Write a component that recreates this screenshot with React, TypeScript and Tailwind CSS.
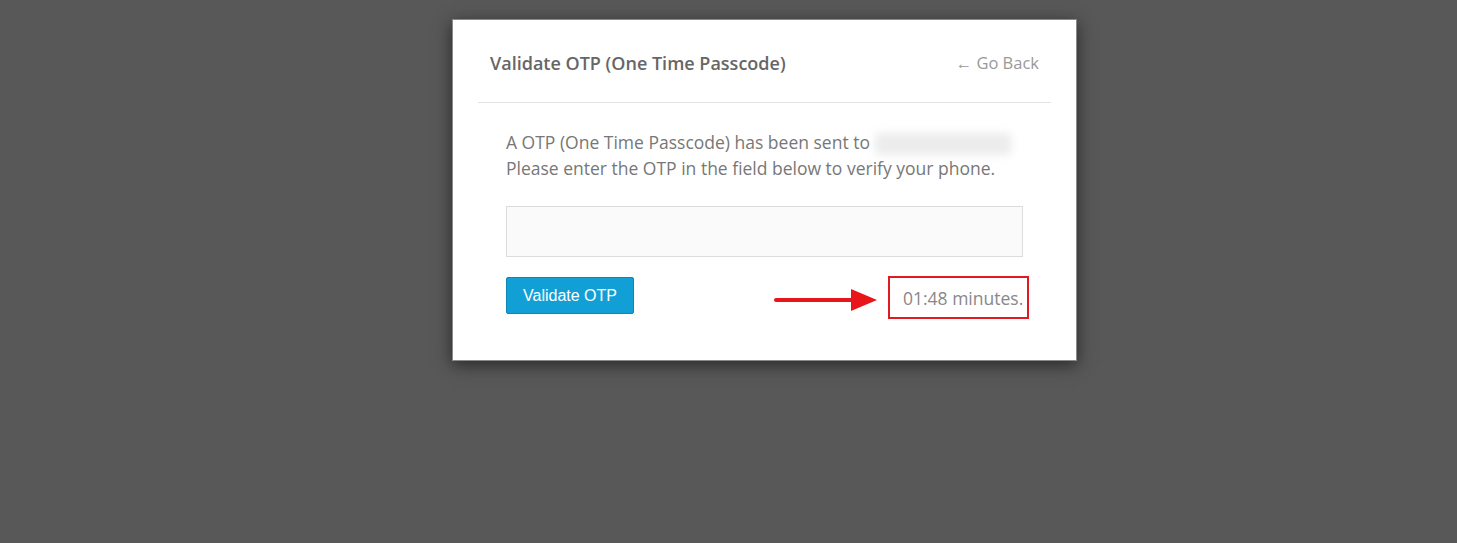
export default function App() {
  return (
    <div className="h-[543px] w-full bg-[#585858] pt-[19px] font-['Open_Sans',sans-serif]">
      <div className="ml-[452px] w-[625px] h-[342px] bg-white border border-[#8a8a8a] shadow-[0_4px_16px_rgba(0,0,0,0.55)] px-[25px]">
        {/* Header */}
        <div className="flex items-center justify-between px-3 pt-[31px] pb-[27px] border-b border-[#e3e3e3]">
          <h2 className="text-[18px] leading-[24px] font-semibold text-[#666]">
            Validate OTP (One Time Passcode)
          </h2>
          <a className="text-[16.5px] leading-[24px] text-[#999] cursor-pointer">
            ← Go Back
          </a>
        </div>

        {/* Body */}
        <div className="px-[28px] pt-[26px]">
          <p className="text-[17.5px] leading-[26px] text-[#777]">
            A OTP (One Time Passcode) has been sent to{" "}
            <span className="inline-block align-middle w-[136px] h-[22px] bg-[#ececec] blur-[4px] rounded" />
            <br />
            Please enter the OTP in the field below to verify your phone.
          </p>

          <input
            type="text"
            className="mt-[25px] block w-full h-[51px] bg-[#fafafa] border border-[#dcdcdc] px-3 outline-none"
          />

          <div className="mt-[20px] flex items-start justify-between">
            <button className="h-[37px] px-4 bg-[#129fd6] border border-[#0c86b4] rounded-[2px] text-white text-[16px] font-['Liberation_Sans',Arial,sans-serif]">
              Validate OTP
            </button>

            <div className="flex items-start gap-[10px] -mr-[6px] -mt-px">
              <svg className="mt-[12px]" width="104" height="24" viewBox="0 0 104 24">
                <line x1="2" y1="12" x2="80" y2="12" stroke="#e8161b" strokeWidth="4" strokeLinecap="round" />
                <polygon points="77,1 103,12 77,23" fill="#e8161b" />
              </svg>
              <div className="h-[43px] w-[141px] border-2 border-[#e21a1f] flex items-center pl-[13px] text-[17.5px] text-[#888]">
                01:48 minutes.
              </div>
            </div>
          </div>
        </div>
      </div>
    </div>
  );
}
